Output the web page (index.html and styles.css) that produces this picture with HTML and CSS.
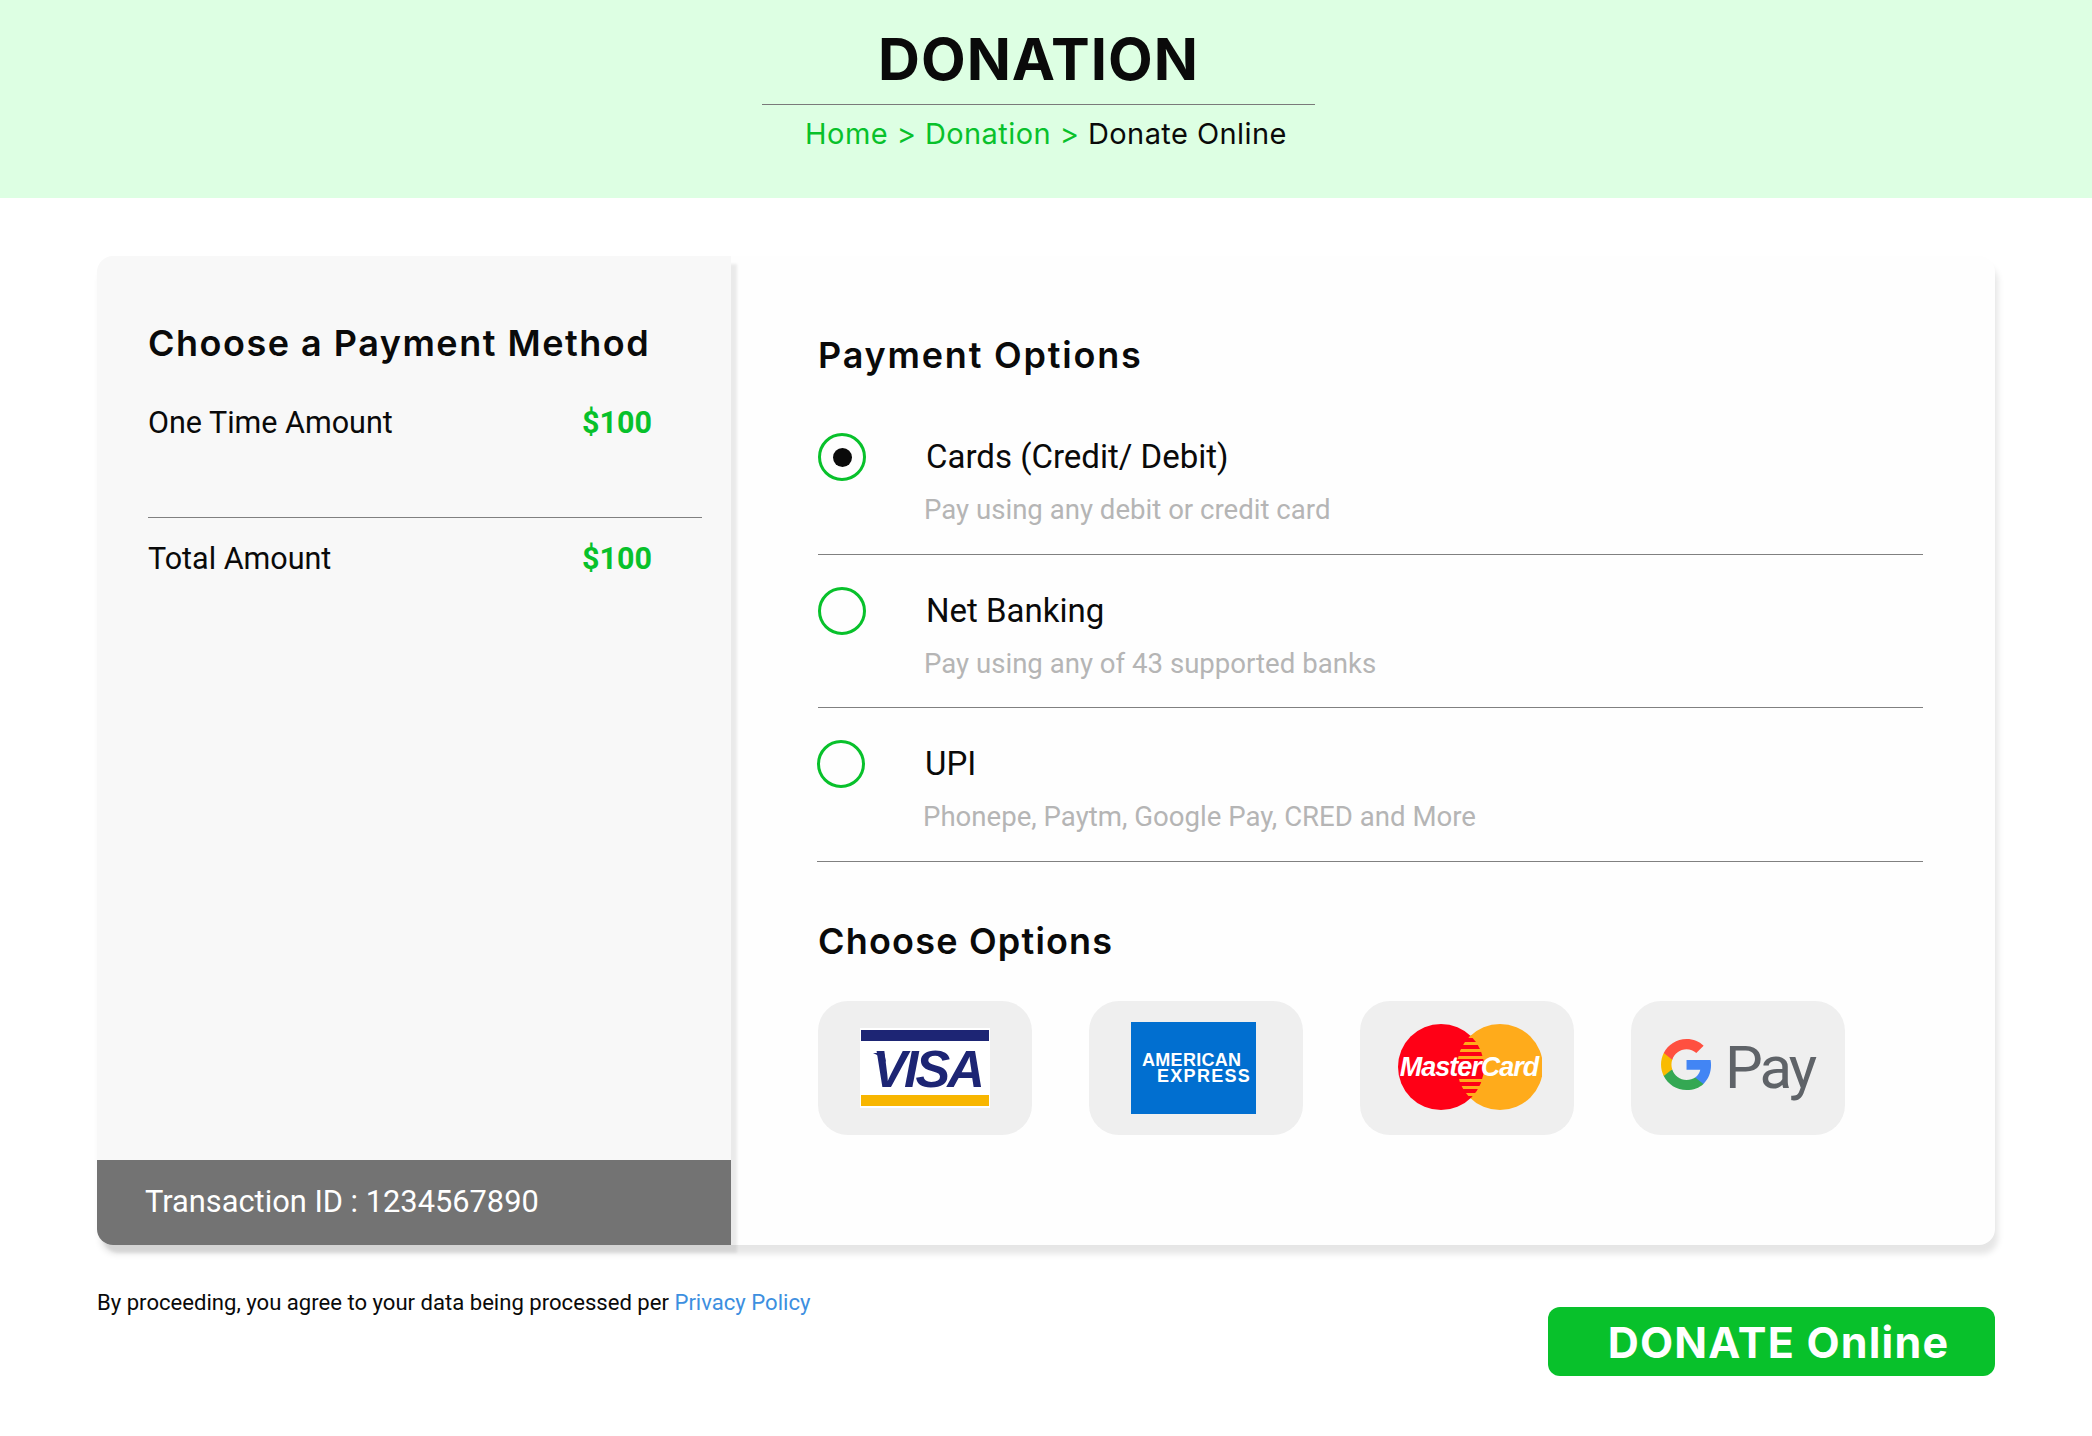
FILE: index.html
```html
<!DOCTYPE html>
<html lang="en">
<head>
<meta charset="UTF-8" />
<meta name="viewport" content="width=device-width, initial-scale=1" />
<title>Donation - Donate Online</title>
<link rel="stylesheet" href="styles.css">
</head>
<body>
<header class="page-header">
  <h1>DONATION</h1>
  <div class="header-rule"></div>
  <div class="breadcrumb"><a href="#">Home</a> &gt; <a href="#">Donation</a> &gt; <span>Donate Online</span></div>
</header>
<main class="checkout">
  <section class="summary">
    <h2>Choose a Payment Method</h2>
    <div class="amount-row first"><span>One Time Amount</span><strong>$100</strong></div>
    <div class="summary-rule"></div>
    <div class="amount-row"><span>Total Amount</span><strong>$100</strong></div>
    <div class="transaction">Transaction ID : 1234567890</div>
  </section>
  <section class="payment">
    <h2 class="options-title">Payment Options</h2>
    <div class="options">
      <label class="option">
        <span class="radio checked"></span>
        <span class="option-text"><b>Cards (Credit/ Debit)</b><small>Pay using any debit or credit card</small></span>
      </label>
      <label class="option">
        <span class="radio"></span>
        <span class="option-text"><b>Net Banking</b><small>Pay using any of 43 supported banks</small></span>
      </label>
      <label class="option option-last">
        <span class="radio"></span>
        <span class="option-text"><b>UPI</b><small>Phonepe, Paytm, Google Pay, CRED and More</small></span>
      </label>
    </div>
    <h2 class="choose-title">Choose Options</h2>
    <div class="logos">
      <div class="logo-card">
        <svg width="130" height="80" viewBox="0 0 130 80">
          <rect width="130" height="80" fill="#fff"/>
          <rect x="1" y="2" width="128" height="11" fill="#1d2574"/>
          <rect x="1" y="67" width="128" height="11" fill="#f8b600"/>
          <path d="M13 25 H24 L26 34 C22 30 18 27 13 25 Z" fill="#1d2574"/>
          <text x="67" y="59" class="visa-text">VISA</text>
        </svg>
      </div>
      <div class="logo-card">
        <div class="amex"><span>AMERICAN</span><span class="amex-second">EXPRESS</span></div>
      </div>
      <div class="logo-card">
        <svg width="150" height="90" viewBox="0 0 150 90">
          <defs>
            <clipPath id="mcOverlap"><circle cx="108" cy="44" r="43"/></clipPath>
          </defs>
          <circle cx="108" cy="44" r="43" fill="#ffab1b"/>
          <circle cx="49" cy="44" r="43" fill="#ff0016"/>
          <g fill="#ffab1b" clip-path="url(#mcOverlap)">
            <rect x="60" y="12" width="32" height="3"/>
            <rect x="60" y="19" width="34" height="3"/>
            <rect x="60" y="26" width="36" height="3"/>
            <rect x="60" y="33" width="37" height="3"/>
            <rect x="60" y="56" width="37" height="3"/>
            <rect x="60" y="63" width="36" height="3"/>
            <rect x="60" y="70" width="34" height="3"/>
          </g>
          <text x="77" y="53" class="mc-text">MasterCard</text>
        </svg>
      </div>
      <div class="logo-card">
        <svg width="170" height="70" viewBox="0 0 170 70">
          <g transform="translate(5.7 3.7) scale(2.32)">
            <path d="M22.56 12.25c0-.78-.07-1.53-.2-2.25H12v4.26h5.92c-.26 1.37-1.04 2.53-2.21 3.31v2.77h3.57c2.08-1.92 3.28-4.74 3.28-8.09z" fill="#4285f4"/>
            <path d="M12 23c2.97 0 5.46-.98 7.28-2.66l-3.57-2.77c-.98.66-2.23 1.06-3.71 1.06-2.86 0-5.29-1.93-6.16-4.53H2.18v2.84C3.99 20.53 7.7 23 12 23z" fill="#34a853"/>
            <path d="M5.84 14.09c-.22-.66-.35-1.36-.35-2.09s.13-1.43.35-2.09V7.07H2.18C1.43 8.55 1 10.22 1 12s.43 3.45 1.18 4.93l2.85-2.22.81-.62z" fill="#f9bb00"/>
            <path d="M12 5.38c1.62 0 3.06.56 4.21 1.64l3.15-3.15C17.45 2.09 14.97 1 12 1 7.7 1 3.99 3.47 2.18 7.07l3.66 2.84c.87-2.6 3.3-4.53 6.16-4.53z" fill="#ff5040"/>
          </g>
          <text x="72" y="55" class="gpay-text">Pay</text>
        </svg>
      </div>
    </div>
  </section>
</main>
<footer class="page-footer">
  <p>By proceeding, you agree to your data being processed per <a href="#">Privacy Policy</a></p>
  <button class="donate-btn">DONATE Online</button>
</footer>
</body>
</html>
```
FILE: styles.css
```css
body {
  margin: 0;
  font-family: Roboto, sans-serif;
  background-color: white;
  color: #0a0a0a;
}
a {
  text-decoration: none;
}
h1, h2 {
  margin: 0;
  font-family: Inter, sans-serif;
}
.page-header {
  background-color: #ddffe3;
  height: 198px;
  box-sizing: border-box;
  padding-top: 28px;
  text-align: center;
}
.page-header h1 {
  width: 553px;
  margin-left: 762px;
  font-size: 58px;
  font-weight: 700;
  letter-spacing: 1px;
  line-height: 62px;
}
.header-rule {
  width: 553px;
  height: 1px;
  margin: 14px 0 0 762px;
  background-color: #7a7a7a;
}
.breadcrumb {
  margin-top: 10px;
  font-family: Inter, sans-serif;
  font-size: 29px;
  letter-spacing: 0.43px;
  line-height: 38px;
  color: #08c12b;
}
.breadcrumb a {
  color: #08c12b;
}
.breadcrumb span {
  color: #0a0a0a;
}
.checkout {
  display: flex;
  height: 989px;
  margin: 58px 97px 0;
  border-radius: 16px;
  box-shadow: 3px 9px 6px rgba(0,0,0,0.1);
  background-color: #fefefe;
}
.summary {
  width: 634px;
  flex-shrink: 0;
  display: flex;
  flex-direction: column;
  box-sizing: border-box;
  padding-top: 65px;
  background-color: #f8f8f8;
  border-radius: 16px 0 0 16px;
  box-shadow: 6px 8px 3px rgba(0,0,0,0.08);
}
.summary h2, .payment h2 {
  font-size: 36px;
  font-weight: 600;
  letter-spacing: 1.5px;
  line-height: 44px;
}
.summary h2 {
  margin-left: 51px;
}
.amount-row {
  display: flex;
  justify-content: space-between;
  width: 504px;
  margin-left: 51px;
  font-size: 30.5px;
  line-height: 41px;
}
.amount-row.first {
  margin-top: 37px;
}
.amount-row strong {
  color: #08c12b;
  font-weight: 700;
}
.summary-rule {
  width: 554px;
  height: 1px;
  margin: 74px 0 20px 51px;
  background-color: #808080;
}
.transaction {
  margin-top: auto;
  height: 85px;
  padding-left: 48px;
  background-color: #737373;
  border-radius: 0 0 0 16px;
  color: white;
  font-size: 30.8px;
  line-height: 84px;
}
.payment {
  flex: 1;
  box-sizing: border-box;
  padding: 77px 72px 0 87px;
}
.payment .options-title {
  letter-spacing: 1.8px;
}
.options {
  margin-top: 24px;
}
.option {
  display: flex;
  height: 153.5px;
  box-sizing: border-box;
  padding-top: 32px;
  border-bottom: 1px solid #808080;
}
.option-last {
  margin-left: -1px;
}
.radio {
  width: 48px;
  height: 48px;
  box-sizing: border-box;
  flex-shrink: 0;
  display: flex;
  align-items: center;
  justify-content: center;
  border: 3px solid #08c12b;
  border-radius: 50%;
}
.radio.checked::before {
  content: "";
  width: 19px;
  height: 19px;
  border-radius: 50%;
  background-color: #0a0a0a;
}
.option-text {
  margin-left: 60px;
  padding-top: 4px;
}
.option-text b {
  display: block;
  font-size: 33px;
  font-weight: 400;
  line-height: 40px;
}
.option-text small {
  display: block;
  margin-top: 18px;
  margin-left: -2px;
  font-size: 27.6px;
  line-height: 30px;
  color: #b5b5b5;
}
.payment .choose-title {
  margin-top: 57px;
  letter-spacing: 1.2px;
}
.logos {
  display: flex;
  gap: 57px;
  margin-top: 38px;
}
.logo-card {
  width: 214px;
  height: 134px;
  display: flex;
  align-items: center;
  justify-content: center;
  background-color: #efefef;
  border-radius: 30px;
}
.visa-text {
  font-family: "Liberation Sans", sans-serif;
  font-size: 52px;
  font-weight: 700;
  font-style: italic;
  letter-spacing: -3px;
  text-anchor: middle;
  fill: #1d2574;
}
.amex {
  width: 125px;
  height: 92px;
  margin-right: 5px;
  display: flex;
  flex-direction: column;
  justify-content: center;
  box-sizing: border-box;
  padding-left: 11px;
  background-color: #016fd0;
  color: white;
  font-family: "Liberation Sans", sans-serif;
  font-size: 18px;
  font-weight: 700;
  letter-spacing: 0.3px;
  line-height: 16px;
}
.amex-second {
  margin-left: 15px;
  letter-spacing: 1.3px;
}
.mc-text {
  font-family: "Liberation Sans", sans-serif;
  font-size: 27px;
  font-weight: 700;
  font-style: italic;
  letter-spacing: -1px;
  text-anchor: middle;
  fill: white;
}
.gpay-text {
  font-family: Roboto, sans-serif;
  font-size: 60px;
  font-weight: 400;
  letter-spacing: -3px;
  fill: #5f6368;
}
.page-footer {
  display: flex;
  justify-content: space-between;
  align-items: flex-start;
  margin: 42px 97px 0;
}
.page-footer p {
  margin: 0;
  font-size: 22.1px;
  line-height: 30px;
}
.page-footer a {
  color: #3d8fe0;
}
.donate-btn {
  width: 447px;
  height: 69px;
  margin-top: 20px;
  padding: 0 0 0 14px;
  border: none;
  border-radius: 12px;
  background-color: #08c12b;
  color: white;
  font-family: Inter, sans-serif;
  font-size: 43px;
  font-weight: 700;
  letter-spacing: 1.2px;
  cursor: pointer;
}
```
